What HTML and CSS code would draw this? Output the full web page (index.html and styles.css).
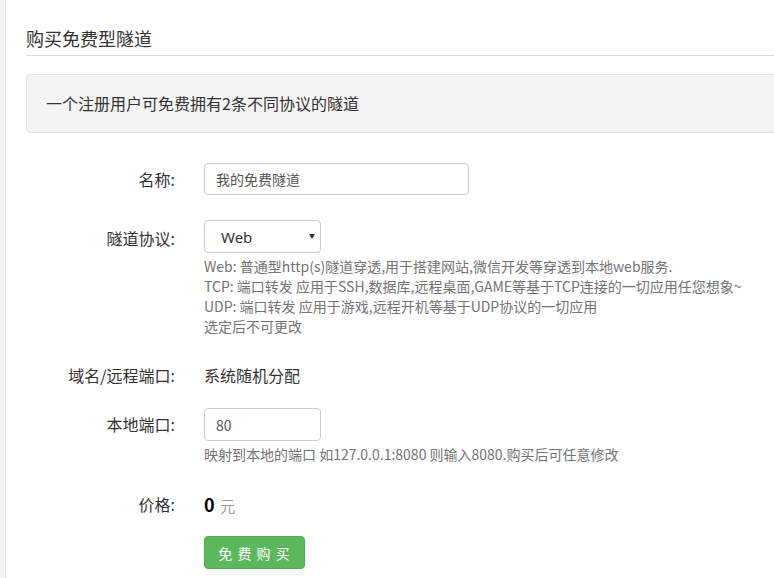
FILE: index.html
```html
<!DOCTYPE html>
<html lang="zh-CN">
<head>
<meta charset="utf-8">
<title>购买免费型隧道</title>
<link rel="stylesheet" href="styles.css">
</head>
<body>
<div class="page">
  <div class="strip"></div>
  <main class="content">
    <h3 class="title">购买免费型隧道</h3>
    <div class="well">一个注册用户可免费拥有2条不同协议的隧道</div>
    <form class="form">
      <div class="row r1">
        <label class="label">名称:</label>
        <div class="field"><input class="input name-input" type="text" value="我的免费隧道"></div>
      </div>
      <div class="row r2">
        <label class="label">隧道协议:</label>
        <div class="field">
          <span class="select-wrap"><select class="select"><option>Web</option><option>TCP</option><option>UDP</option></select></span>
          <div class="help">
            <div>Web: 普通型http(s)隧道穿透,用于搭建网站,微信开发等穿透到本地web服务.</div>
            <div>TCP: 端口转发 应用于SSH,数据库,远程桌面,GAME等基于TCP连接的一切应用任您想象~</div>
            <div>UDP: 端口转发 应用于游戏,远程开机等基于UDP协议的一切应用</div>
            <div>选定后不可更改</div>
          </div>
        </div>
      </div>
      <div class="row r3">
        <label class="label">域名/远程端口:</label>
        <div class="field static">系统随机分配</div>
      </div>
      <div class="row r4">
        <label class="label">本地端口:</label>
        <div class="field">
          <input class="input port-input" type="text" value="80">
          <div class="help">映射到本地的端口 如127.0.0.1:8080 则输入8080.购买后可任意修改</div>
        </div>
      </div>
      <div class="row r5">
        <label class="label">价格:</label>
        <div class="field static"><strong class="price">0</strong> <span class="unit">元</span></div>
      </div>
      <div class="row r6">
        <span class="label"></span>
        <div class="field"><button class="btn" type="button">免 费 购 买</button></div>
      </div>
    </form>
  </main>
</div>
</body>
</html>
```

FILE: styles.css
```css
* { box-sizing: border-box; }
html, body {
  margin: 0;
  padding: 0;
  background: #fff;
  overflow: hidden;
}
body {
  font-family: "Noto Sans CJK SC", "Noto Sans", sans-serif;
  color: #333;
  font-size: 14px;
}
.page {
  display: flex;
  width: 800px;
  height: 578px;
}
.strip {
  width: 6px;
  flex: none;
  background: #f6f5f1;
  border-right: 1px solid #e6e6e6;
}
.content {
  flex: 1;
  padding-left: 20px;
}
.title {
  margin: 25px 0 0;
  font-size: 18px;
  font-weight: normal;
  line-height: 26px;
  padding-bottom: 4px;
  border-bottom: 1px solid #dedede;
}
.well {
  margin-top: 18px;
  height: 59px;
  background: #f4f4f4;
  border: 1px solid #e3e3e3;
  border-radius: 4px 0 0 4px;
  padding-left: 19px;
  font-size: 16px;
  line-height: 57px;
}
.form {
  margin-top: 30px;
}
.row {
  display: grid;
  grid-template-columns: 149px 1fr;
  column-gap: 29px;
}
.label {
  text-align: right;
  font-size: 16px;
  line-height: 34px;
  color: #333;
}
.r1 { margin-bottom: 25px; }
.r1 .label { line-height: 32px; }
.r2 { margin-bottom: 22px; }
.r2 .label { line-height: 36px; }
.r3 { margin-bottom: 16px; }
.r4 { margin-bottom: 23px; }
.r4 .label { line-height: 33px; }
.r5 { margin-bottom: 13px; }
.static {
  font-size: 16px;
  line-height: 34px;
}
.input {
  display: block;
  height: 32px;
  border: 1px solid #ccc;
  border-radius: 4px;
  padding: 0 11px;
  font: inherit;
  font-size: 14px;
  color: #555;
  outline: none;
}
.name-input { width: 265px; }
.port-input { width: 117px; height: 33px; }
.select-wrap {
  position: relative;
  display: block;
  width: 117px;
  height: 33px;
}
.select-wrap::after {
  content: "";
  position: absolute;
  right: 6px;
  top: 14px;
  border-left: 3px solid transparent;
  border-right: 3px solid transparent;
  border-top: 5px solid #333;
  pointer-events: none;
}
.select {
  -webkit-appearance: none;
  appearance: none;
  width: 117px;
  height: 33px;
  border: 1px solid #ccc;
  border-radius: 4px;
  background: #fff;
  padding: 0 0 0 16px;
  font-family: "Noto Sans", "Noto Sans CJK SC", sans-serif;
  font-size: 15px;
  color: #333;
  outline: none;
}
.help {
  margin-top: 3px;
  font-size: 14px;
  line-height: 20px;
  color: #737373;
  white-space: nowrap;
}
.price {
  font-size: 18px;
  font-weight: bold;
  color: #000;
  margin-right: 2px;
}
.unit {
  font-size: 15px;
  color: #999;
}
.btn {
  display: block;
  width: 101px;
  height: 33px;
  background: #5cb85c;
  border: 1px solid #4cae4c;
  border-radius: 4px;
  color: #fff;
  font-family: "Noto Sans CJK SC", sans-serif;
  font-size: 14px;
  letter-spacing: 1px;
  padding: 0;
}
```
